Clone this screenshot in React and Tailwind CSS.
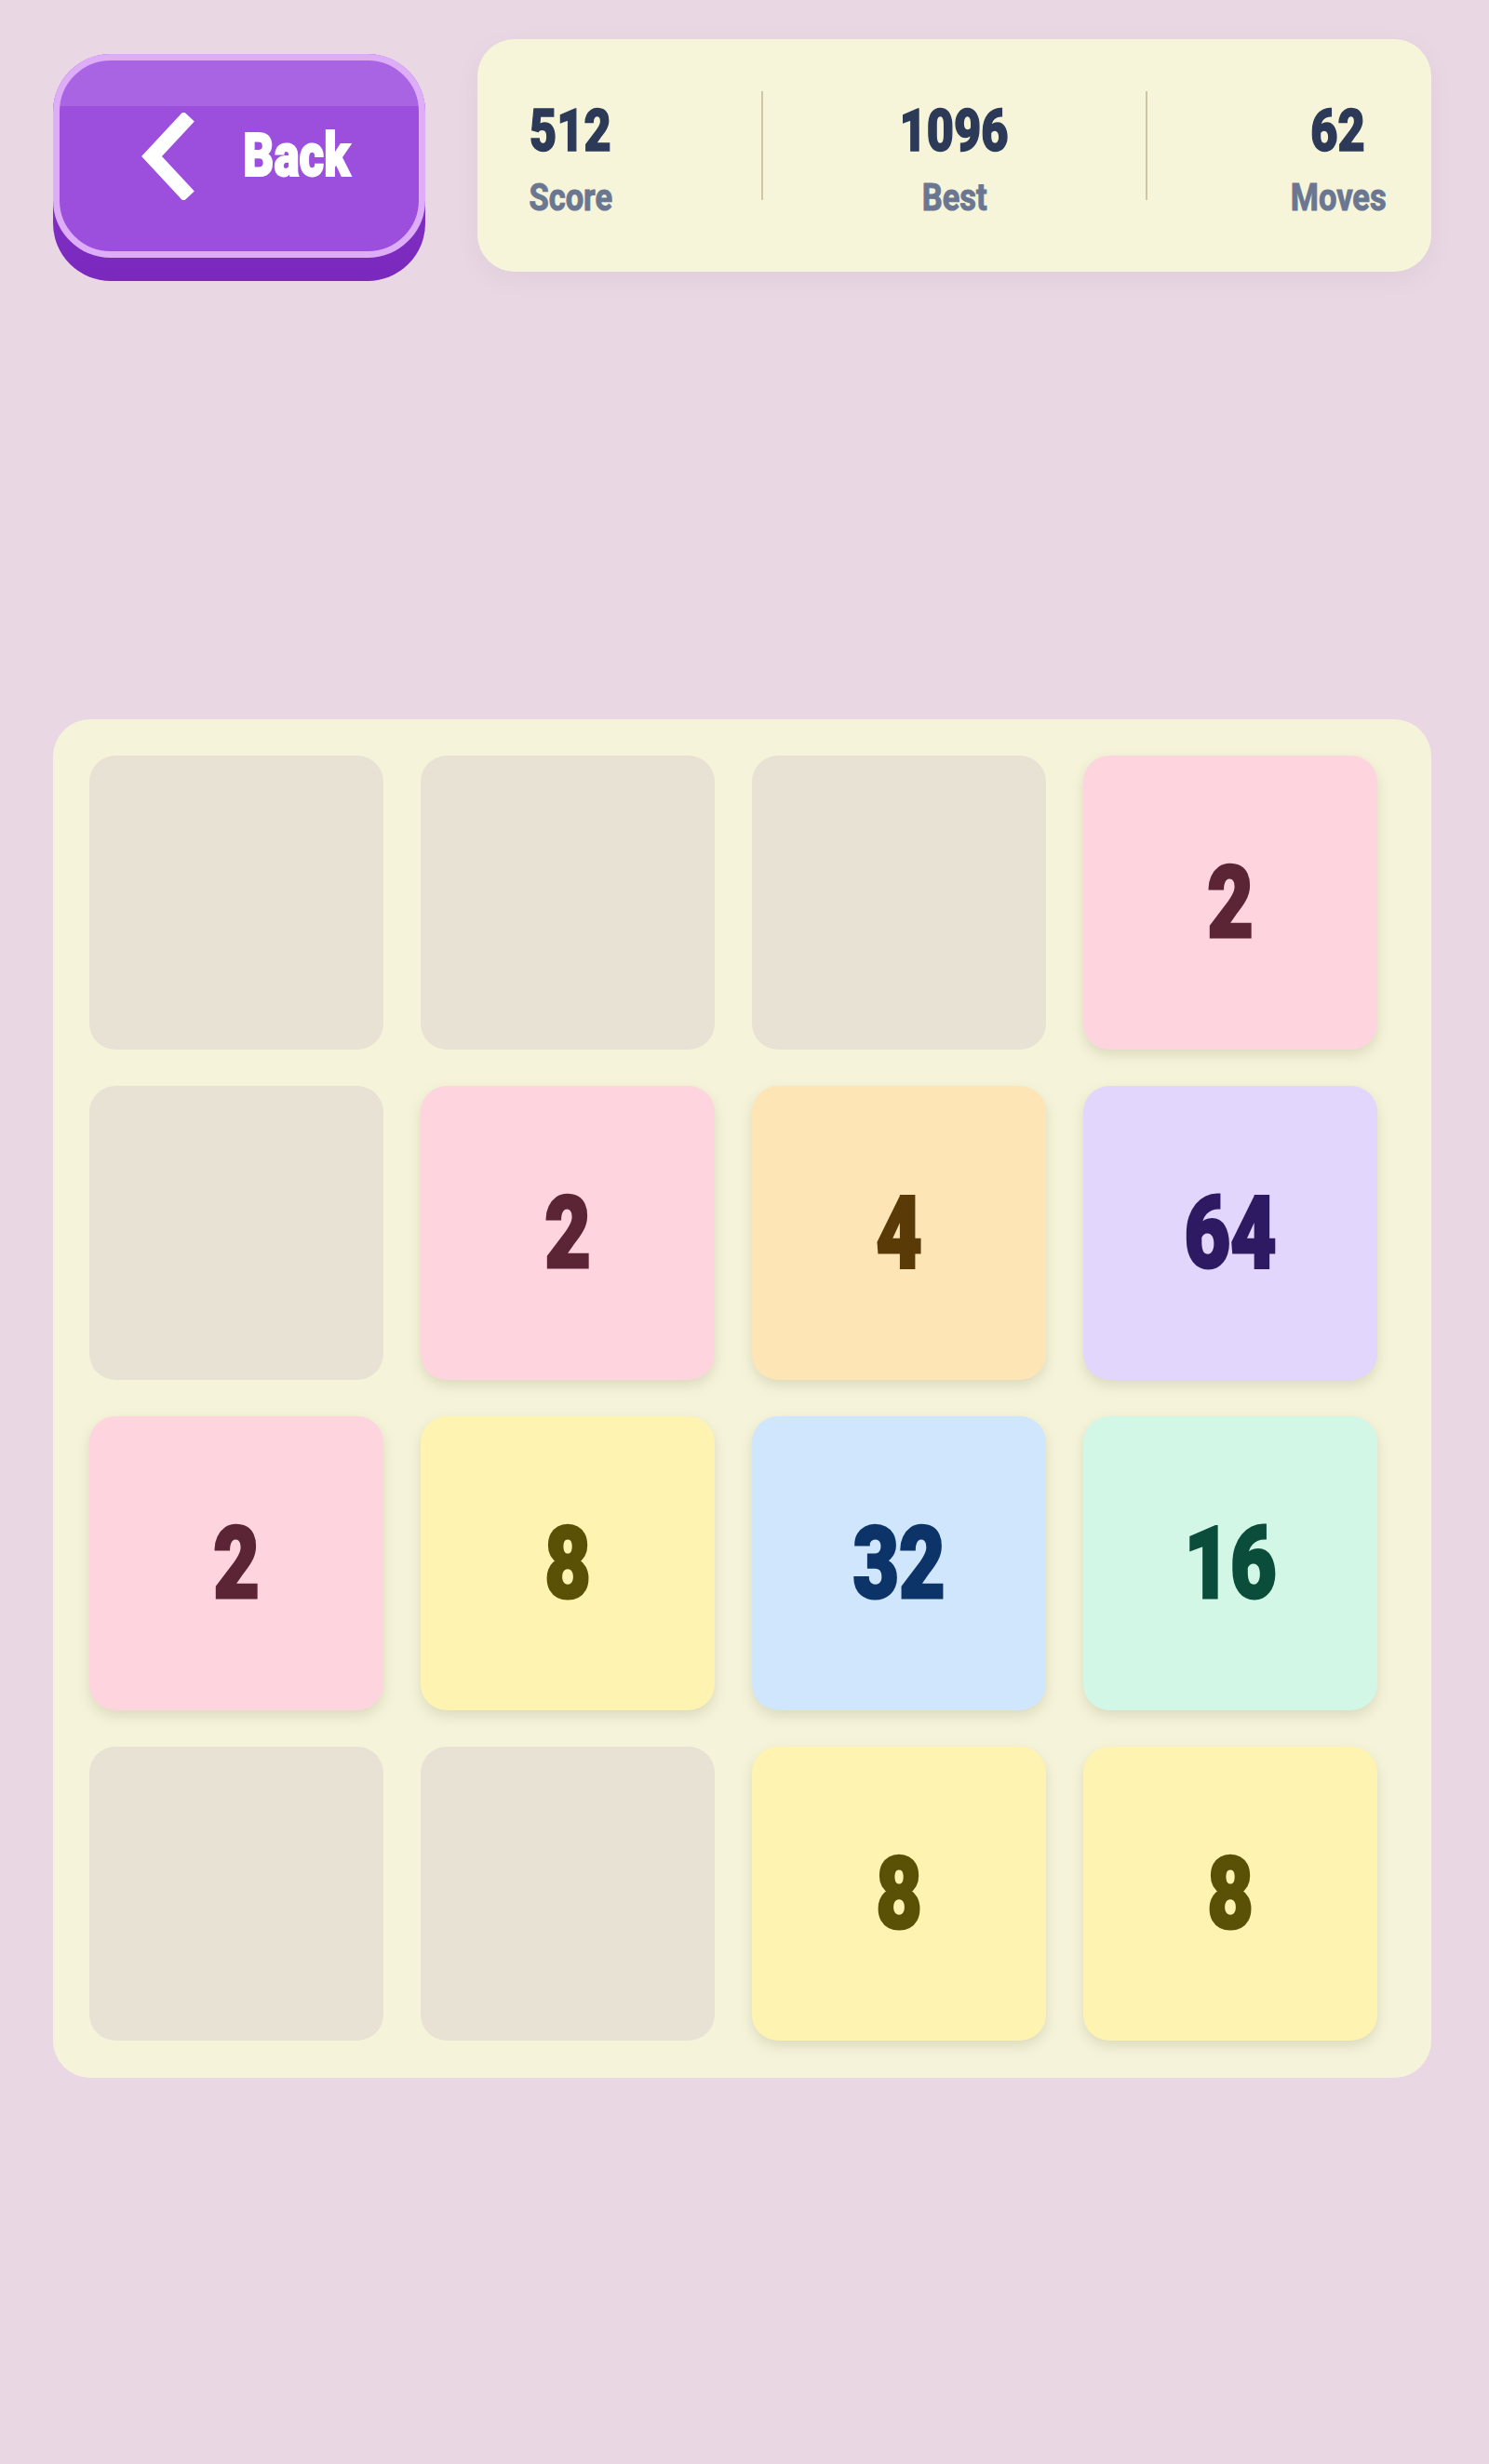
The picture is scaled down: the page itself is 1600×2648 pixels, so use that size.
const board = [
  [0, 0, 0, 2],
  [0, 2, 4, 64],
  [2, 8, 32, 16],
  [0, 0, 8, 8],
];

// colour per tile value
const tileColors = {
  0: "bg-[#e8e2d4]",
  2: "bg-[#fed5df] text-[#5b2535] shadow-[0_6px_14px_rgba(110,100,60,0.18)]",
  4: "bg-[#fee5b6] text-[#5a3a06] shadow-[0_6px_14px_rgba(110,100,60,0.18)]",
  8: "bg-[#fef3b1] text-[#5a5006] shadow-[0_6px_14px_rgba(110,100,60,0.18)]",
  16: "bg-[#d3f7e6] text-[#0a4d3a] shadow-[0_6px_14px_rgba(110,100,60,0.18)]",
  32: "bg-[#cfe6fd] text-[#0c3468] shadow-[0_6px_14px_rgba(110,100,60,0.18)]",
  64: "bg-[#e3d6fd] text-[#2d1a62] shadow-[0_6px_14px_rgba(110,100,60,0.18)]",
};

function BackButton() {
  return (
    <div className="mt-[16px] flex h-[244px] w-[400px] shrink-0 cursor-pointer flex-col rounded-[62px] bg-linear-to-b from-[#8b3ccf] to-[#7a28bd]">
      <div className="flex h-[219px] w-full items-center justify-center gap-[36px] rounded-[62px] border-[7px] border-[#deadf8] bg-[linear-gradient(to_bottom,#a964e3_0%,#a964e3_24%,#9b4fdc_24%,#9b4fdc_100%)] pl-[26px]">
        <svg width="62" height="94" viewBox="0 0 62 94" className="shrink-0">
          <polyline
            points="54,4 14,47 54,90"
            fill="none"
            stroke="#ffffff"
            strokeWidth="16"
            strokeLinejoin="miter"
          />
        </svg>
        <span className="inline-block scale-x-[0.8] text-[64px] leading-none font-black text-white [-webkit-text-stroke:2px_#ffffff]">
          Back
        </span>
      </div>
    </div>
  );
}

function Stat({ value, label }) {
  return (
    <div className="mt-[11px] flex w-[130px] flex-col items-center">
      <span className="inline-block scale-x-[0.8] text-[63px] leading-none font-black text-[#2c3a58] [-webkit-text-stroke:1.5px_#2c3a58]">
        {value}
      </span>
      <span className="mt-[20px] inline-block scale-x-[0.84] text-[41px] leading-none font-bold text-[#6b7791] [-webkit-text-stroke:1px_#6b7791]">
        {label}
      </span>
    </div>
  );
}

function StatsPanel() {
  return (
    <div className="flex h-[250px] flex-1 items-start justify-between rounded-[40px] bg-[#f6f5da] px-[35px] pt-[56px] shadow-[0_8px_24px_rgba(120,90,110,0.08)]">
      <Stat value="512" label="Score" />
      <div className="h-[117px] w-[2px] bg-[#cdc7a8]" />
      <Stat value="1096" label="Best" />
      <div className="h-[117px] w-[2px] bg-[#cdc7a8]" />
      <Stat value="62" label="Moves" />
    </div>
  );
}

function Tile({ value }) {
  return (
    <div
      className={`flex h-[316px] items-center justify-center rounded-[28px] ${tileColors[value]}`}
    >
      {value > 0 && (
        <span className="inline-block scale-x-[0.8] text-[107px] leading-none font-black [-webkit-text-stroke:3px_currentColor]">
          {value}
        </span>
      )}
    </div>
  );
}

export default function App() {
  return (
    <div className="min-h-screen bg-[#e9d8e4] pt-[42px] pr-[62px] pl-[57px] [font-family:Roboto,'Liberation_Sans',sans-serif]">
      <div className="flex items-start gap-[56px]">
        <BackButton />
        <StatsPanel />
      </div>

      <div className="mt-[471px] rounded-[40px] bg-[#f5f4da] pt-[39px] pr-[58px] pb-[40px] pl-[39px]">
        <div className="grid grid-cols-4 gap-x-[40px] gap-y-[39px]">
          {board.flat().map((v, i) => (
            <Tile key={i} value={v} />
          ))}
        </div>
      </div>
    </div>
  );
}
